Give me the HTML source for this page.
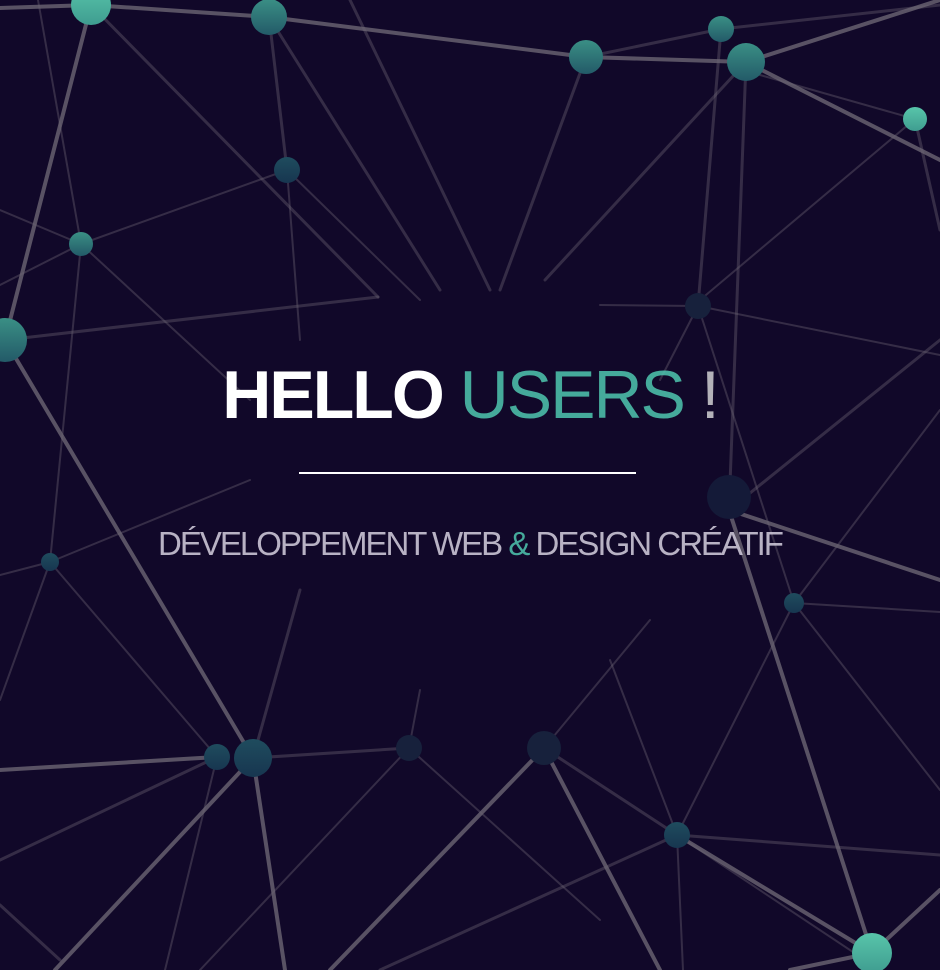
<!DOCTYPE html>
<html><head><meta charset="utf-8"><style>
html,body{margin:0;padding:0;width:940px;height:970px;overflow:hidden;background:#110829;}
svg{position:absolute;left:0;top:0}
.t{position:absolute;left:0;width:940px;text-align:center;font-family:"Liberation Sans",sans-serif;white-space:nowrap}
</style></head><body>
<svg width="940" height="970" viewBox="0 0 940 970">
<defs>
<linearGradient id="g1" x1="0" y1="0" x2="0" y2="1"><stop offset="0" stop-color="#58c5aa"/><stop offset="1" stop-color="#3f9d90"/></linearGradient>
<linearGradient id="g2" x1="0" y1="0" x2="0" y2="1"><stop offset="0" stop-color="#3a8f85"/><stop offset="1" stop-color="#235a68"/></linearGradient>
<linearGradient id="g3" x1="0" y1="0" x2="0" y2="1"><stop offset="0" stop-color="#1f4c5e"/><stop offset="1" stop-color="#173650"/></linearGradient>
</defs>
<g stroke="#6b6573" stroke-linecap="round" fill="none">
<g stroke-opacity="0.8" stroke-width="4">
<line x1="0" y1="8" x2="91" y2="5"/><line x1="91" y1="5" x2="269" y2="17"/><line x1="91" y1="5" x2="5" y2="340"/>
<line x1="269" y1="17" x2="586" y2="57"/><line x1="586" y1="57" x2="746" y2="62"/><line x1="746" y1="62" x2="940" y2="0"/>
<line x1="746" y1="62" x2="940" y2="160"/><line x1="5" y1="340" x2="253" y2="758"/><line x1="253" y1="758" x2="285" y2="970"/>
<line x1="253" y1="758" x2="55" y2="970"/><line x1="0" y1="770" x2="217" y2="757"/><line x1="677" y1="835" x2="872" y2="953"/>
<line x1="729" y1="510" x2="872" y2="953"/><line x1="872" y1="953" x2="940" y2="890"/><line x1="872" y1="953" x2="790" y2="970"/>
<line x1="729" y1="510" x2="940" y2="580"/><line x1="544" y1="748" x2="330" y2="970"/><line x1="544" y1="748" x2="660" y2="970"/>
</g>
<g stroke-opacity="0.4" stroke-width="3">
<line x1="91" y1="5" x2="378" y2="297"/><line x1="269" y1="17" x2="440" y2="290"/><line x1="269" y1="17" x2="287" y2="170"/>
<line x1="586" y1="57" x2="500" y2="290"/><line x1="746" y1="62" x2="545" y2="280"/><line x1="746" y1="62" x2="729" y2="510"/>
<line x1="721" y1="29" x2="698" y2="306"/><line x1="586" y1="57" x2="721" y2="29"/><line x1="721" y1="29" x2="940" y2="5"/>
<line x1="5" y1="340" x2="378" y2="297"/><line x1="729" y1="510" x2="940" y2="340"/><line x1="253" y1="758" x2="409" y2="748"/>
<line x1="253" y1="758" x2="300" y2="590"/><line x1="544" y1="748" x2="677" y2="835"/><line x1="677" y1="835" x2="940" y2="855"/>
<line x1="677" y1="835" x2="380" y2="970"/><line x1="0" y1="860" x2="217" y2="757"/><line x1="915" y1="119" x2="940" y2="230"/>
<line x1="350" y1="0" x2="490" y2="290"/><line x1="0" y1="905" x2="60" y2="960"/>
</g>
<g stroke-opacity="0.4" stroke-width="2">
<line x1="38" y1="0" x2="81" y2="244"/><line x1="81" y1="244" x2="287" y2="170"/><line x1="81" y1="244" x2="0" y2="210"/>
<line x1="81" y1="244" x2="0" y2="285"/><line x1="81" y1="244" x2="50" y2="562"/><line x1="81" y1="244" x2="250" y2="400"/>
<line x1="287" y1="170" x2="300" y2="340"/><line x1="287" y1="170" x2="420" y2="300"/><line x1="915" y1="119" x2="700" y2="300"/>
<line x1="698" y1="306" x2="940" y2="355"/><line x1="698" y1="306" x2="600" y2="305"/><line x1="698" y1="306" x2="660" y2="380"/>
<line x1="698" y1="306" x2="794" y2="603"/><line x1="50" y1="562" x2="217" y2="757"/><line x1="50" y1="562" x2="0" y2="575"/>
<line x1="50" y1="562" x2="0" y2="700"/><line x1="50" y1="562" x2="250" y2="480"/><line x1="794" y1="603" x2="940" y2="612"/>
<line x1="794" y1="603" x2="940" y2="790"/><line x1="794" y1="603" x2="677" y2="835"/><line x1="794" y1="603" x2="940" y2="410"/>
<line x1="217" y1="757" x2="165" y2="970"/><line x1="409" y1="748" x2="200" y2="970"/><line x1="409" y1="748" x2="600" y2="920"/>
<line x1="677" y1="835" x2="683" y2="970"/><line x1="677" y1="835" x2="610" y2="660"/><line x1="677" y1="835" x2="880" y2="970"/>
<line x1="544" y1="748" x2="650" y2="620"/><line x1="409" y1="748" x2="420" y2="690"/>
<line x1="915" y1="119" x2="760" y2="75"/>
</g>
</g>
<circle cx="91" cy="5" r="20" fill="url(#g1)"/>
<circle cx="269" cy="17" r="18" fill="url(#g2)"/>
<circle cx="586" cy="57" r="17" fill="url(#g2)"/>
<circle cx="721" cy="29" r="13" fill="url(#g2)"/>
<circle cx="746" cy="62" r="19" fill="url(#g2)"/>
<circle cx="915" cy="119" r="12" fill="url(#g1)"/>
<circle cx="287" cy="170" r="13" fill="url(#g3)"/>
<circle cx="81" cy="244" r="12" fill="url(#g2)"/>
<circle cx="5" cy="340" r="22" fill="url(#g2)"/>
<circle cx="698" cy="306" r="13" fill="#17213c"/>
<circle cx="729" cy="497" r="22" fill="#141a38"/>
<circle cx="50" cy="562" r="9" fill="url(#g3)"/>
<circle cx="794" cy="603" r="10" fill="url(#g3)"/>
<circle cx="217" cy="757" r="13" fill="url(#g3)"/>
<circle cx="253" cy="758" r="19" fill="url(#g3)"/>
<circle cx="409" cy="748" r="13" fill="#17213c"/>
<circle cx="544" cy="748" r="17" fill="#17213c"/>
<circle cx="677" cy="835" r="13" fill="url(#g3)"/>
<circle cx="872" cy="953" r="20" fill="url(#g1)"/>
<line x1="299" y1="473" x2="636" y2="473" stroke="#fff" stroke-width="2"/>
</svg>
<div class="t" style="top:355px;font-size:68px;line-height:80px;letter-spacing:-2px;color:#fff;">
<span style="font-weight:bold">HELLO</span> <span style="color:#4fc7b0;opacity:0.85">USERS</span> <span style="color:#ddd;opacity:0.8">!</span></div>
<div class="t" style="top:524px;font-size:33px;line-height:40px;color:#d6d0e0;opacity:0.85;letter-spacing:-2px;">DÉVELOPPEMENT WEB <span style="color:#4fc7b0">&amp;</span> DESIGN CRÉATIF</div>
</body></html>
